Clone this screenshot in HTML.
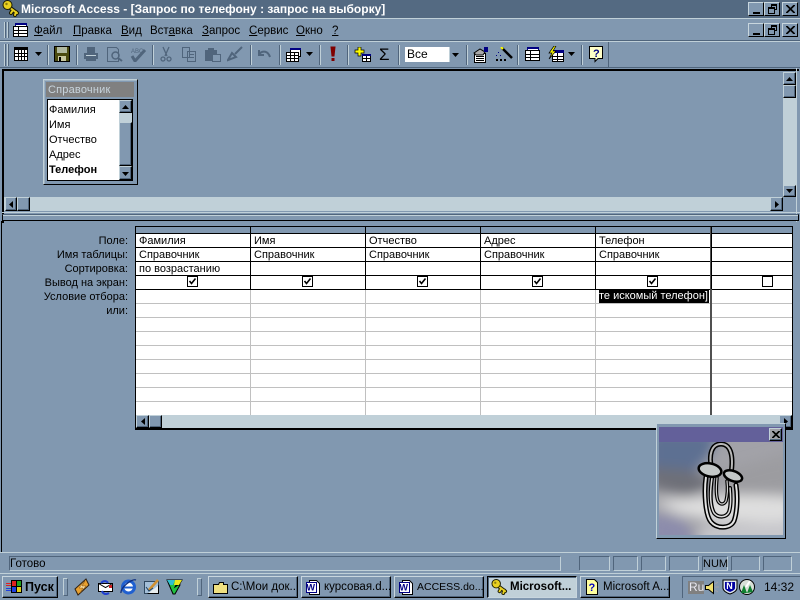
<!DOCTYPE html>
<html><head><meta charset="utf-8">
<style>
html,body{margin:0;padding:0;background:#8198b0}
#r{position:relative;width:800px;height:600px;overflow:hidden;background:#8198b0;font:11px/13px "Liberation Sans",sans-serif;color:#000}
#r div,#r svg,#r span.a{position:absolute}
.t{white-space:nowrap}
.btn{background:#8198b0;border-top:1px solid #c0d0d8;border-left:1px solid #c0d0d8;border-right:1px solid #000;border-bottom:1px solid #000;box-shadow:inset -1px -1px 0 #50657c;box-sizing:border-box}
.wb{background:#8198b0;border-top:1px solid #c8d6de;border-left:1px solid #c8d6de;border-right:1px solid #000;border-bottom:1px solid #000;box-sizing:border-box;width:16px;height:14px}
.gr{width:1px;background:#c0d0d8;box-shadow:1px 0 0 #50657c}
.grip{width:3px;background:#8198b0;border:1px solid;border-color:#c0d0d8 #50657c #50657c #c0d0d8;box-sizing:content-box}
.sep{width:1px;background:#50657c;box-shadow:1px 0 0 #c0d0d8}
.m{top:25px;font-size:11.5px;white-space:nowrap}
.m u{text-decoration:underline}
.h{background:#000}
.lb{right:672px;text-align:right;white-space:nowrap;font-size:11px}
.c{white-space:nowrap;font-size:11px}
.st{top:556px;height:15px;border:1px solid;border-color:#50657c #c0d0d8 #c0d0d8 #50657c;box-sizing:border-box}
.tb{top:576px;height:22px;border-top:1px solid #c8d6de;border-left:1px solid #c8d6de;border-right:1px solid #000;border-bottom:1px solid #000;box-sizing:border-box;background:#8198b0;box-shadow:inset -1px -1px 0 #50657c;font-size:11.5px;line-height:20px;white-space:nowrap;overflow:hidden}
</style></head><body><div id="r">

<!-- title bar -->
<div style="left:0;top:0;width:800px;height:18px;background:#546a82"></div>
<div style="left:0;top:18px;width:800px;height:1px;background:#c0d0d8"></div>
<svg style="left:2px;top:0" width="18" height="17" viewBox="0 0 18 17"><g fill="none" stroke-linecap="round"><path d="M7 7l8 6M11 10l-2 3M14 12l-1 3" stroke="#1a1a00" stroke-width="4"/><path d="M7 7l8 6M11 10l-2 3M14 12l-1 3" stroke="#e8d020" stroke-width="2"/></g><circle cx="5.500" cy="5" r="4.500" fill="#e8d020" stroke="#1a1a00"/><circle cx="4.500" cy="4" r="1.200" fill="#8a7a10"/></svg>
<div class="t" style="left:21px;top:1px;color:#fff;font-weight:bold;font-size:12px;line-height:16px">Microsoft Access - [Запрос по телефону : запрос на выборку]</div>
<div class="wb" style="left:748px;top:2px"><div style="left:4px;top:9px;width:7px;height:2px;background:#000"></div></div>
<div class="wb" style="left:764px;top:2px"><div style="left:6px;top:1px;width:6px;height:6px;border:1px solid #000;border-top-width:2px;box-sizing:border-box"></div><div style="left:3px;top:4px;width:7px;height:7px;border:1px solid #000;border-top-width:2px;box-sizing:border-box;background:#8198b0"></div></div>
<div class="wb" style="left:782px;top:2px"><svg style="left:3px;top:2px" width="9" height="8"><path d="M0 0l8 8M1 0l8 8M8 0L0 8M9 0L1 8" stroke="#000" stroke-width="1"/></svg></div>

<!-- menu bar -->
<div style="left:0;top:40px;width:800px;height:1px;background:#50657c"></div>
<div style="left:0;top:41px;width:800px;height:1px;background:#c0d0d8"></div>
<div class="gr" style="left:4px;top:22px;height:16px"></div>
<div class="gr" style="left:7px;top:22px;height:16px"></div>
<svg style="left:12px;top:22px" width="17" height="16"><rect x="3.500" y="1.500" width="11" height="9" fill="#fff" stroke="#000082"/><rect x="3" y="1" width="12" height="2" fill="#000082"/><rect x="1.500" y="4.500" width="14" height="10" fill="#fff" stroke="#000"/><path d="M6.500 5v9M1 8.500h14M1 11.500h14" stroke="#000" stroke-width="1"/></svg>
<div class="m" style="left:34px"><u>Ф</u>айл</div>
<div class="m" style="left:73px"><u>П</u>равка</div>
<div class="m" style="left:121px"><u>В</u>ид</div>
<div class="m" style="left:150px">Вст<u>а</u>вка</div>
<div class="m" style="left:202px"><u>З</u>апрос</div>
<div class="m" style="left:249px"><u>С</u>ервис</div>
<div class="m" style="left:296px"><u>О</u>кно</div>
<div class="m" style="left:332px"><u>?</u></div>
<div class="wb" style="left:748px;top:23px"><div style="left:4px;top:9px;width:7px;height:2px;background:#000"></div></div>
<div class="wb" style="left:764px;top:23px"><div style="left:6px;top:1px;width:6px;height:6px;border:1px solid #000;border-top-width:2px;box-sizing:border-box"></div><div style="left:3px;top:4px;width:7px;height:7px;border:1px solid #000;border-top-width:2px;box-sizing:border-box;background:#8198b0"></div></div>
<div class="wb" style="left:782px;top:23px"><svg style="left:3px;top:2px" width="9" height="8"><path d="M0 0l8 8M1 0l8 8M8 0L0 8M9 0L1 8" stroke="#000" stroke-width="1"/></svg></div>

<!-- toolbar -->
<div style="left:608px;top:42px;width:192px;height:25px;background:#8198b0"></div>
<div style="left:608px;top:42px;width:1px;height:25px;background:#50657c"></div>
<div class="gr" style="left:4px;top:44px;height:22px"></div>
<div class="gr" style="left:7px;top:44px;height:22px"></div>
<svg style="left:14px;top:47px" width="14" height="14"><rect x=".5" y=".5" width="13" height="13" fill="#fff" stroke="#000"/><rect x="1" y="1" width="12" height="2" fill="#000"/><path d="M1 6.500h12M1 9.500h12M4.500 3v10M7.500 3v10M10.500 3v10" stroke="#000"/></svg>
<svg style="left:35px;top:52px" width="8" height="4"><path d="M0 0h7L3.500 4z"/></svg>
<div class="sep" style="left:47px;top:45px;height:20px"></div>
<svg style="left:54px;top:46px" width="16" height="16"><rect x=".5" y=".5" width="15" height="15" fill="#4a4a10" stroke="#000"/><rect x="3" y="1" width="10" height="6" fill="#b0b8a0"/><rect x="4" y="10" width="8" height="5" fill="#c8c8a0"/><rect x="5" y="11" width="2" height="4" fill="#000"/></svg>
<div class="sep" style="left:76px;top:45px;height:20px"></div>
<svg style="left:82px;top:46px" width="18" height="16"><path d="M5.500 1.500h7v5h-7zM2.500 7.500h13v5h-13zM4.500 12.500v2h9v-2" fill="#50657c" stroke="#50657c"/><path d="M4 9.500h10" stroke="#c0d0d8"/></svg>
<svg style="left:106px;top:46px" width="17" height="16" fill="none" stroke="#50657c"><path d="M1.500 1.500h9l2 2v12h-11z"/><circle cx="9.500" cy="9.500" r="3.500" stroke-width="1.500"/><path d="M12 12l4 3" stroke-width="2"/></svg>
<svg style="left:129px;top:46px" width="18" height="16" fill="none" stroke="#50657c"><path d="M3 10l3 5 10-11" stroke-width="3"/><text x="2" y="7" font-size="6" fill="#50657c" stroke="none" font-family="Liberation Sans">ABC</text></svg>
<div class="sep" style="left:152px;top:45px;height:20px"></div>
<svg style="left:160px;top:46px" width="12" height="16" fill="none" stroke="#50657c" stroke-width="1.300"><path d="M3 1l4 9M9 1L5 10"/><circle cx="3" cy="13" r="2"/><circle cx="9" cy="13" r="2"/></svg>
<svg style="left:181px;top:46px" width="16" height="16" fill="none" stroke="#50657c"><path d="M1.500 1.500h7v10h-7zM6.500 5.500h8v10h-8z" fill="#8198b0"/><path d="M8 8.500h5M8 11.500h5"/></svg>
<svg style="left:204px;top:46px" width="17" height="16"><path d="M1 4h12v11H1z" fill="#50657c"/><rect x="4" y="2" width="6" height="3" fill="#50657c"/><rect x="8.500" y="8.500" width="8" height="7" fill="#8198b0" stroke="#50657c"/></svg>
<svg style="left:227px;top:46px" width="17" height="16" fill="none" stroke="#50657c" stroke-width="2"><path d="M15 1L8 8M1 14l4-7 4 4z"/></svg>
<div class="sep" style="left:250px;top:45px;height:20px"></div>
<svg style="left:257px;top:48px" width="15" height="12" fill="none" stroke="#50657c" stroke-width="2"><path d="M2 6c4-4 9-3 11 3M2 2v5h5"/></svg>
<div class="sep" style="left:279px;top:45px;height:20px"></div>
<svg style="left:285px;top:47px" width="16" height="15"><rect x="5.500" y="1.500" width="10" height="8" fill="#fff" stroke="#000"/><rect x="5" y="1" width="11" height="2" fill="#000082"/><rect x="1.500" y="5.500" width="12" height="9" fill="#fff" stroke="#000"/><path d="M1 8.500h12M1 11.500h12M5.500 5v9M9.500 5v9" stroke="#000"/></svg>
<svg style="left:306px;top:52px" width="8" height="4"><path d="M0 0h7L3.500 4z"/></svg>
<div class="sep" style="left:319px;top:45px;height:20px"></div>
<svg style="left:329px;top:46px" width="8" height="16"><path d="M2 1h4L5 10H3z" fill="#800000" stroke="#800000"/><rect x="2.500" y="12" width="3" height="3" fill="#800000"/></svg>
<div class="sep" style="left:347px;top:45px;height:20px"></div>
<svg style="left:354px;top:47px" width="17" height="15"><path d="M4 0h3v3h3v3H7v3H4V6H1V3h3z" fill="#ff0" stroke="#000" stroke-width=".7"/><rect x="8.500" y="7.500" width="8" height="7" fill="#fff" stroke="#000"/><rect x="8" y="7" width="9" height="2" fill="#000082"/><path d="M8 11.500h8M12.500 9v5" stroke="#000"/></svg>
<div class="t" style="left:379px;top:46px;font:17px/17px 'Liberation Sans',sans-serif">Σ</div>
<div class="sep" style="left:398px;top:45px;height:20px"></div>
<div style="left:405px;top:47px;width:45px;height:15px;background:#fff"></div>
<div class="t" style="left:407px;top:48px;font-size:12px">Все</div>
<div style="left:449px;top:47px;width:12px;height:15px;background:#8198b0;border-left:1px solid #c0d0d8;box-sizing:border-box"></div>
<svg style="left:452px;top:53px" width="8" height="4"><path d="M0 0h7L3.500 4z"/></svg>
<div class="sep" style="left:466px;top:45px;height:20px"></div>
<svg style="left:472px;top:46px" width="17" height="17"><rect x="2.500" y="7.500" width="11" height="9" fill="#fff" stroke="#000"/><path d="M4 10.500h8M4 12.500h8M4 14.500h8" stroke="#000"/><path d="M2 7l6-4 5 3-2 3H4z" fill="#aaa" stroke="#000"/><rect x="12" y="1" width="4" height="5" fill="#000082"/></svg>
<svg style="left:495px;top:47px" width="18" height="16"><path d="M7 1l10 10" stroke="#000" stroke-width="2.500"/><path d="M6 0l2 2" stroke="#ff0" stroke-width="2"/><path d="M1 12h2v2H1zM5 12h2v2H5zM9 12h2v2H9z"/><path d="M3 5h1v1H3zM5 8h1v1H5zM1 8h1v1H1z" fill="#000082"/></svg>
<div class="sep" style="left:517px;top:45px;height:20px"></div>
<svg style="left:524px;top:46px" width="16" height="16"><rect x="3.500" y="1.500" width="11" height="9" fill="#fff" stroke="#000082"/><rect x="3" y="1" width="12" height="2" fill="#000082"/><rect x="1.500" y="4.500" width="14" height="10" fill="#fff" stroke="#000"/><path d="M6.500 5v9M1 8.500h14M1 11.500h14" stroke="#000"/></svg>
<svg style="left:547px;top:46px" width="17" height="17"><rect x="5.500" y="6.500" width="11" height="9" fill="#fff" stroke="#000"/><rect x="5" y="4" width="12" height="3" fill="#000082"/><path d="M5 10.500h11M5 13.500h11M10.500 7v9" stroke="#000"/><path d="M7 0L2 7h3l-3 6 7-8H6l3-5z" fill="#ff0" stroke="#000" stroke-width=".7"/></svg>
<svg style="left:568px;top:52px" width="8" height="4"><path d="M0 0h7L3.500 4z"/></svg>
<div class="sep" style="left:581px;top:45px;height:20px"></div>
<svg style="left:589px;top:46px" width="15" height="17"><path d="M.5.500h13v12H9l-3 3v-3H.5z" fill="#ffffc8" stroke="#000"/><text x="4" y="11" font-size="11" font-weight="bold" fill="#000082" font-family="Liberation Sans">?</text></svg>

<!-- window frame -->
<div style="left:0;top:67px;width:800px;height:1px;background:#50657c"></div>
<div style="left:2px;top:69px;width:797px;height:2px;background:#000"></div>
<div style="left:2px;top:69px;width:2px;height:154px;background:#000"></div>
<div style="left:1px;top:221px;width:1px;height:331px;background:#000"></div>
<div style="left:796px;top:68px;width:1px;height:154px;background:#c0d0d8"></div>

<!-- upper pane scrollbars -->
<div style="left:4px;top:197px;width:766px;height:14px;background:#c0d0d8"></div>
<div class="btn" style="left:5px;top:197px;width:12px;height:14px"><svg style="left:3px;top:3px" width="4" height="7"><path d="M4 0v7L0 3.500z"/></svg></div>
<div class="btn" style="left:17px;top:197px;width:13px;height:14px"></div>
<div class="btn" style="left:770px;top:197px;width:13px;height:14px;"><svg style="left:4px;top:3px" width="4" height="7"><path d="M0 0v7l4-3.500z"/></svg></div>
<div style="left:783px;top:72px;width:13px;height:125px;background:#c0d0d8"></div>
<div class="btn" style="left:783px;top:72px;width:13px;height:13px"><svg style="left:2px;top:4px" width="7" height="4"><path d="M0 4h7L3.500 0z"/></svg></div>
<div class="btn" style="left:783px;top:85px;width:13px;height:13px"></div>
<div class="btn" style="left:783px;top:185px;width:13px;height:12px"><svg style="left:2px;top:3px" width="7" height="4"><path d="M0 0h7L3.500 4z"/></svg></div>

<!-- table box -->
<div style="left:43px;top:79px;width:95px;height:106px;background:#8198b0;border:1px solid;border-color:#c0d0d8 #000 #000 #c0d0d8;box-sizing:border-box;box-shadow:inset 1px 1px 0 #a0b4c4"></div>
<div style="left:46px;top:82px;width:88px;height:15px;background:#808080"></div>
<div class="t" style="left:48px;top:84px;color:#c8d4dc;font-size:11px;letter-spacing:.2px">Справочник</div>
<div style="left:47px;top:99px;width:86px;height:82px;background:#fff;border:1px solid #000;box-sizing:border-box"></div>
<div class="c" style="left:49px;top:104px">Фамилия</div>
<div class="c" style="left:49px;top:119px">Имя</div>
<div class="c" style="left:49px;top:134px">Отчество</div>
<div class="c" style="left:49px;top:149px">Адрес</div>
<div class="c" style="left:49px;top:164px;font-weight:bold">Телефон</div>
<div style="left:119px;top:100px;width:13px;height:80px;background:#c0d0d8"></div>
<div class="btn" style="left:119px;top:100px;width:13px;height:13px"><svg style="left:2px;top:4px" width="7" height="4"><path d="M0 4h7L3.500 0z"/></svg></div>
<div class="btn" style="left:119px;top:122px;width:13px;height:44px"></div>
<div class="btn" style="left:119px;top:166px;width:13px;height:14px"><svg style="left:2px;top:5px" width="7" height="4"><path d="M0 0h7L3.500 4z"/></svg></div>

<!-- splitter -->
<div style="left:2px;top:212px;width:798px;height:1px;background:#c0d0d8"></div>
<div style="left:2px;top:214px;width:797px;height:7px;background:#8198b0;border:1px solid #000;border-top:1px solid #50657c;box-sizing:border-box"></div>
<div style="left:3px;top:215px;width:795px;height:1px;background:#c0d0d8"></div>

<!-- grid -->
<div style="left:135px;top:226px;width:658px;height:204px;background:#fff;box-sizing:border-box;border:1px solid #000;border-right:1px solid #000;border-bottom:2px solid #000"></div>
<div style="left:136px;top:227px;width:656px;height:6px;background:#8198b0"></div>
<div class="h" style="left:136px;top:233px;width:656px;height:1px"></div>
<div class="h" style="left:136px;top:247px;width:656px;height:1px"></div>
<div class="h" style="left:136px;top:261px;width:656px;height:1px"></div>
<div class="h" style="left:136px;top:275px;width:656px;height:1px"></div>
<div class="h" style="left:136px;top:289px;width:656px;height:1px"></div>
<div style="left:136px;top:303px;width:656px;height:1px;background:#c0c0c0"></div>
<div style="left:136px;top:317px;width:656px;height:1px;background:#c0c0c0"></div>
<div style="left:136px;top:331px;width:656px;height:1px;background:#c0c0c0"></div>
<div style="left:136px;top:345px;width:656px;height:1px;background:#c0c0c0"></div>
<div style="left:136px;top:359px;width:656px;height:1px;background:#c0c0c0"></div>
<div style="left:136px;top:373px;width:656px;height:1px;background:#c0c0c0"></div>
<div style="left:136px;top:387px;width:656px;height:1px;background:#c0c0c0"></div>
<div style="left:136px;top:401px;width:656px;height:1px;background:#c0c0c0"></div>

<div class="h" style="left:250px;top:227px;width:1px;height:63px"></div>
<div class="h" style="left:365px;top:227px;width:1px;height:63px"></div>
<div class="h" style="left:480px;top:227px;width:1px;height:63px"></div>
<div class="h" style="left:595px;top:227px;width:1px;height:63px"></div>
<div style="left:250px;top:290px;width:1px;height:125px;background:#c0c0c0"></div>
<div style="left:365px;top:290px;width:1px;height:125px;background:#c0c0c0"></div>
<div style="left:480px;top:290px;width:1px;height:125px;background:#c0c0c0"></div>
<div style="left:595px;top:290px;width:1px;height:125px;background:#c0c0c0"></div>
<div style="left:710px;top:227px;width:2px;height:188px;background:#505050"></div>
<div class="h" style="left:711px;top:227px;width:1px;height:62px"></div>

<div class="lb" style="top:235px">Поле:</div>
<div class="lb" style="top:249px">Имя таблицы:</div>
<div class="lb" style="top:263px">Сортировка:</div>
<div class="lb" style="top:277px">Вывод на экран:</div>
<div class="lb" style="top:291px">Условие отбора:</div>
<div class="lb" style="top:305px">или:</div>

<div class="c" style="left:139px;top:235px">Фамилия</div>
<div class="c" style="left:254px;top:235px">Имя</div>
<div class="c" style="left:369px;top:235px">Отчество</div>
<div class="c" style="left:484px;top:235px">Адрес</div>
<div class="c" style="left:599px;top:235px">Телефон</div>
<div class="c" style="left:139px;top:249px">Справочник</div>
<div class="c" style="left:254px;top:249px">Справочник</div>
<div class="c" style="left:369px;top:249px">Справочник</div>
<div class="c" style="left:484px;top:249px">Справочник</div>
<div class="c" style="left:599px;top:249px">Справочник</div>
<div class="c" style="left:139px;top:263px">по возрастанию</div>

<svg style="left:187px;top:276px" width="12" height="12"><rect x=".5" y=".5" width="10" height="10" fill="#fff" stroke="#000"/><path d="M2.500 5l2 2.500 4-5" fill="none" stroke="#000" stroke-width="1.600"/></svg>
<svg style="left:302px;top:276px" width="12" height="12"><rect x=".5" y=".5" width="10" height="10" fill="#fff" stroke="#000"/><path d="M2.500 5l2 2.500 4-5" fill="none" stroke="#000" stroke-width="1.600"/></svg>
<svg style="left:417px;top:276px" width="12" height="12"><rect x=".5" y=".5" width="10" height="10" fill="#fff" stroke="#000"/><path d="M2.500 5l2 2.500 4-5" fill="none" stroke="#000" stroke-width="1.600"/></svg>
<svg style="left:532px;top:276px" width="12" height="12"><rect x=".5" y=".5" width="10" height="10" fill="#fff" stroke="#000"/><path d="M2.500 5l2 2.500 4-5" fill="none" stroke="#000" stroke-width="1.600"/></svg>
<svg style="left:647px;top:276px" width="12" height="12"><rect x=".5" y=".5" width="10" height="10" fill="#fff" stroke="#000"/><path d="M2.500 5l2 2.500 4-5" fill="none" stroke="#000" stroke-width="1.600"/></svg>
<svg style="left:762px;top:276px" width="12" height="12"><rect x=".5" y=".5" width="10" height="10" fill="#fff" stroke="#000"/></svg>

<div style="left:599px;top:290px;width:110px;height:13px;background:#000;overflow:hidden"></div>
<div class="c" style="left:599px;top:290px;color:#fff;width:111px;overflow:hidden">те искомый телефон]</div>

<!-- grid scrollbar -->
<div style="left:136px;top:415px;width:656px;height:13px;background:#c0d0d8"></div>
<div class="btn" style="left:136px;top:415px;width:13px;height:13px"><svg style="left:4px;top:2px" width="4" height="7"><path d="M4 0v7L0 3.500z"/></svg></div>
<div class="btn" style="left:149px;top:415px;width:13px;height:13px"></div>
<div class="btn" style="left:779px;top:415px;width:13px;height:13px"><svg style="left:4px;top:2px" width="4" height="7"><path d="M0 0v7l4-3.500z"/></svg></div>

<!-- office assistant -->
<div style="left:656px;top:423px;width:130px;height:116px;background:#8198b0;border:1px solid;border-color:#c0d0d8 #000 #000 #c0d0d8;box-sizing:border-box"></div>
<div style="left:659px;top:427px;width:124px;height:15px;background:#63609a"></div>
<div class="btn" style="left:769px;top:428px;width:13px;height:13px;background:#a0a0a8"><svg style="left:2px;top:2px" width="8" height="7"><path d="M0 0l7 7M1 0l7 7M7 0L0 7M8 0L1 7" stroke="#000"/></svg></div>
<svg style="left:659px;top:442px" width="124" height="93" viewBox="0 0 124 93">
<defs><filter id="b" x="-30%" y="-30%" width="160%" height="160%"><feGaussianBlur stdDeviation="6"/></filter></defs>
<rect width="124" height="93" fill="#a2a2a8"/>
<g filter="url(#b)">
<path d="M-10-10H60L50 15 35 30-10 25z" fill="#5d7092"/>
<path d="M-10 25L30 28 60 40 30 55-10 45z" fill="#6e6f78"/>
<path d="M60 30L134 10V50L70 55z" fill="#9c9ca0"/>
<path d="M-5 60C30 55 70 50 134 55V80H60L20 72z" fill="#dedede"/>
<path d="M-10 70L25 78 40 103H-10z" fill="#8c8cac"/>
<path d="M40 85L134 78V103H40z" fill="#c8c8cc"/>
</g>
<g fill="none" stroke-linecap="round">
<path d="M53 28C49 12 53 2 62 2s13 10 10 30" stroke="#000" stroke-width="5"/>
<path d="M53 28C49 12 53 2 62 2s13 10 10 30" stroke="#b8b8b8" stroke-width="2"/>
<path d="M47 35c-2 14-1 38 5 45 6 7 19 7 23-1 3-8 4-24 2-36" stroke="#000" stroke-width="5"/>
<path d="M47 35c-2 14-1 38 5 45 6 7 19 7 23-1 3-8 4-24 2-36" stroke="#e4e4e4" stroke-width="2"/>
<path d="M53 36c-2 14-2 28 2 35 4 5 12 5 15-1 2-6 2-14 1-24" stroke="#000" stroke-width="4"/>
<path d="M53 36c-2 14-2 28 2 35 4 5 12 5 15-1 2-6 2-14 1-24" stroke="#dcdcdc" stroke-width="1.500"/>
<path d="M58 36c-1 10-1 18 1 23 2 4 6 4 8 0 1-4 2-12 1-20" stroke="#000" stroke-width="3.500"/>
<path d="M58 36c-1 10-1 18 1 23 2 4 6 4 8 0 1-4 2-12 1-20" stroke="#cfcfcf" stroke-width="1.200"/>
</g>
<ellipse cx="51" cy="28" rx="11.500" ry="6.500" transform="rotate(12 51 28)" fill="#c4c8c8" stroke="#000" stroke-width="2.500"/>
<ellipse cx="74" cy="34" rx="9.500" ry="5" transform="rotate(20 74 34)" fill="#c4c8c8" stroke="#000" stroke-width="2.500"/>
</svg>

<!-- status bar -->
<div style="left:0;top:552px;width:800px;height:1px;background:#c0d0d8"></div>
<div class="st" style="left:9px;width:552px"></div>
<div class="t" style="left:10px;top:558px;font-size:11.5px">Готово</div>
<div class="st" style="left:579px;width:31px"></div>
<div class="st" style="left:613px;width:25px"></div>
<div class="st" style="left:641px;width:25px"></div>
<div class="st" style="left:669px;width:30px"></div>
<div class="st" style="left:702px;width:26px"></div>
<div class="t" style="left:703px;top:558px;font-size:11px">NUM</div>
<div class="st" style="left:731px;width:29px"></div>
<div class="st" style="left:763px;width:29px"></div>

<!-- taskbar -->
<div style="left:0;top:573px;width:800px;height:1px;background:#c0d0d8"></div>
<div class="tb" style="left:2px;width:56px;font-weight:bold;font-size:12.5px;padding-left:22px">Пуск</div>
<svg style="left:6px;top:580px" width="17" height="14"><rect x="5.500" y=".5" width="5" height="6" fill="#e02020" stroke="#000"/><rect x="10.500" y=".5" width="5" height="6" fill="#20a020" stroke="#000"/><rect x="5.500" y="6.500" width="5" height="6" fill="#2040e0" stroke="#000"/><rect x="10.500" y="6.500" width="5" height="6" fill="#e0d020" stroke="#000"/><path d="M0 3.500h5" stroke="#e02020"/><path d="M0 5.500h5" stroke="#e02020"/><path d="M0 8.500h5M0 10.500h5" stroke="#2040e0"/></svg>
<div class="grip" style="left:63px;top:578px;height:16px"></div>
<div class="grip" style="left:197px;top:578px;height:16px"></div>
<svg style="left:74px;top:578px" width="16" height="18"><path d="M12 1L1 11l3 6 11-10z" fill="#e8a030" stroke="#302010"/><path d="M11 3L5 10h4l-3 5 6-7H8z" fill="#ffe0a0" stroke="#805010" stroke-width=".5"/></svg>
<svg style="left:97px;top:579px" width="17" height="16"><rect x="1.500" y="4.500" width="14" height="8" fill="#fff" stroke="#000"/><path d="M4 4c3-3 6-2 7 0M12 14c-3 2-6 1-7-2" fill="none" stroke="#2040d0" stroke-width="2"/><path d="M1.500 4.500l7 4 7-4" fill="none" stroke="#000"/><rect x="12" y="6" width="3" height="3" fill="#d02020"/></svg>
<svg style="left:120px;top:578px" width="17" height="17"><circle cx="8.500" cy="9" r="6" fill="#fff" stroke="#2060d0" stroke-width="3"/><path d="M3 9.500h11" stroke="#2060d0" stroke-width="2"/><path d="M1 15C0 10 12 0 16 2" fill="none" stroke="#103080" stroke-width="1.300"/></svg>
<svg style="left:143px;top:579px" width="17" height="16"><rect x="1.500" y="2.500" width="14" height="12" fill="#e8eef0" stroke="#000"/><path d="M1 2h15v4L4 15H1z" fill="#6090c0" opacity=".5"/><path d="M6 11L15 1" stroke="#d09030" stroke-width="2.500"/><path d="M3 8l3 4 4-3" fill="none" stroke="#204060"/></svg>
<svg style="left:166px;top:579px" width="17" height="16"><path d="M1 1h15l-3 5H10l-1 2 3-2h2l-5 9H7z" fill="#20c040" stroke="#000"/><path d="M1 1h8l-2 5H4z" fill="#30c0d0"/><path d="M9 1h7l-3 5H8z" fill="#e8e820"/></svg>

<div class="tb" style="left:208px;width:90px;padding-left:22px">C:\Мои док...</div>
<svg style="left:213px;top:581px" width="16" height="13"><path d="M.5 3.500h5l1-2h4v2h4v9H.5z" fill="#f0e080" stroke="#000"/></svg>
<div class="tb" style="left:301px;width:90px;padding-left:22px">курсовая.d...</div>
<svg style="left:305px;top:579px" width="16" height="16"><path d="M4.500 1.500h7l3 3v11h-10z" fill="#fff" stroke="#000"/><rect x="1.500" y="3.500" width="10" height="10" fill="#fff" stroke="#000082"/><text x="1.500" y="11.500" font-size="9" font-weight="bold" fill="#000082" font-family="Liberation Sans">W</text></svg>
<div class="tb" style="left:394px;width:90px;padding-left:22px;font-size:10.5px">ACCESS.do...</div>
<svg style="left:398px;top:579px" width="16" height="16"><path d="M4.500 1.500h7l3 3v11h-10z" fill="#fff" stroke="#000"/><rect x="1.500" y="3.500" width="10" height="10" fill="#fff" stroke="#000082"/><text x="1.500" y="11.500" font-size="9" font-weight="bold" fill="#000082" font-family="Liberation Sans">W</text></svg>
<div class="tb" style="left:487px;width:90px;padding-left:22px;background:#c0d0d8;font-weight:bold;border-color:#000 #c8d6de #c8d6de #000;box-shadow:inset 1px 1px 0 #50657c">Microsoft...</div>
<svg style="left:491px;top:579px" width="17" height="16" viewBox="0 0 18 17"><g fill="none" stroke-linecap="round"><path d="M7 7l8 6M11 10l-2 3M14 12l-1 3" stroke="#1a1a00" stroke-width="4"/><path d="M7 7l8 6M11 10l-2 3M14 12l-1 3" stroke="#e8d020" stroke-width="2"/></g><circle cx="5.500" cy="5" r="4.500" fill="#e8d020" stroke="#1a1a00"/><circle cx="4.500" cy="4" r="1.200" fill="#8a7a10"/></svg>
<div class="tb" style="left:580px;width:90px;padding-left:22px">Microsoft A...</div>
<svg style="left:586px;top:579px" width="12" height="16"><path d="M.5.500h8l3 3v12H.5z" fill="#ffffa0" stroke="#000"/><text x="2.500" y="12" font-size="11" font-weight="bold" fill="#0000c0" font-family="Liberation Sans">?</text></svg>

<div style="left:682px;top:576px;width:118px;height:22px;border-top:1px solid #50657c;border-left:1px solid #50657c;box-sizing:border-box"></div>
<div style="left:688px;top:581px;width:16px;height:13px;background:#808080"></div>
<div class="t" style="left:689px;top:581px;color:#e8e8f0;font-size:12px">Ru</div>
<svg style="left:704px;top:579px" width="17" height="16"><path d="M1.500 6.500h3l5-4v12l-5-4h-3z" fill="#f0e070" stroke="#000"/><path d="M11 5l3-2M11 8h4M11 11l3 2" stroke="#a0a0a8"/></svg>
<svg style="left:722px;top:578px" width="16" height="17"><path d="M1 2h14v8c0 3-4 5-7 6-3-1-7-3-7-6z" fill="#e0e8f0" stroke="#000"/><path d="M3 4h10v6c0 2-3 3-5 4-2-1-5-2-5-4z" fill="#0000a0"/><text x="4.200" y="11" font-size="9" font-weight="bold" fill="#fff" font-family="Liberation Sans">N</text></svg>
<svg style="left:739px;top:579px" width="16" height="16"><circle cx="8" cy="8" r="7.500" fill="#d8e0d8" stroke="#000"/><path d="M2 14l3-8 3 8zM8 14l3-8 3 7z" fill="#108030"/><path d="M7 8l4-6" stroke="#fff" stroke-width="2"/></svg>
<div class="t" style="left:764px;top:581px;font-size:12px">14:32</div>

</div></body></html>
